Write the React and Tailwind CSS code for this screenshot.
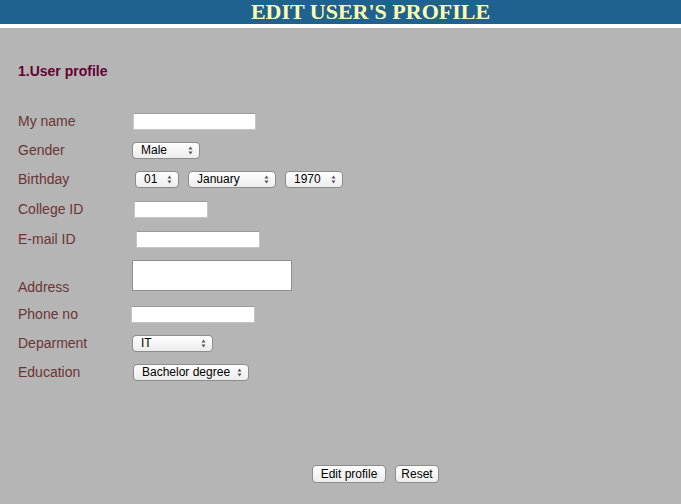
import React from 'react';

const label = "w-[113px] shrink-0 text-[14px] text-[#6b3434] leading-[17px]";
const textBox = "block h-[17px] bg-white border border-[#c4c4c4] border-t-[#9a9a9a] outline-none";

function Select({ value, options, className }) {
  return (
    <div className={"relative h-[17px] " + className}>
      <select
        defaultValue={value}
        className="block appearance-none w-full h-full rounded-[4px] border border-[#8c8c8c] bg-gradient-to-b from-white to-[#ececec] pl-[8px] text-[12px] leading-[15px] text-black outline-none"
        style={{ fontFamily: '"Liberation Sans", Arial, sans-serif' }}
      >
        {options.map((o) => (
          <option key={o}>{o}</option>
        ))}
      </select>
      <svg className="pointer-events-none absolute right-[7px] top-[4px]" width="5" height="9" viewBox="0 0 5 9">
        <path d="M2.5 0.5 L4.5 3.5 L0.5 3.5 Z M2.5 8.5 L4.5 5.5 L0.5 5.5 Z" fill="#555" />
      </svg>
    </div>
  );
}

function Row({ name, h = "h-[29px]", children }) {
  return (
    <div className={"flex items-center " + h}>
      <div className={label}>{name}</div>
      {children}
    </div>
  );
}

const btn = "h-[18px] rounded-[4px] border border-[#8c8c8c] bg-gradient-to-b from-white to-[#ececec] text-[12px] leading-[16px] text-black";

export default function App() {
  return (
    <div
      className="min-h-screen flex flex-col bg-[#b5b5b5]"
      style={{ fontFamily: '"Liberation Sans", Arial, sans-serif' }}
    >
      <div className="h-[24px] bg-[#20628f] pl-[60px] text-center">
        <h1
          className="text-[22px] font-bold leading-[24px] text-[#fdfdb0]"
          style={{ fontFamily: '"Liberation Serif", "Times New Roman", serif' }}
        >
          EDIT USER'S PROFILE
        </h1>
      </div>
      <div className="h-[4px] bg-white" />
      <div className="flex-1 pl-[18px]">
        <h2 className="mt-[35px] text-[14px] font-bold leading-[17px] text-[#660033]">1.User profile</h2>
        <form className="mt-[27px]" onSubmit={(e) => e.preventDefault()}>
          <Row name="My name">
            <input className={textBox + " w-[123px] ml-[2px]"} />
          </Row>
          <Row name="Gender">
            <Select value="Male" options={["Male", "Female"]} className="w-[68px] ml-[1px]" />
          </Row>
          <Row name="Birthday">
            <div className="flex gap-[9px] ml-[4px]">
              <Select value="01" options={["01", "02", "03"]} className="w-[44px]" />
              <Select value="January" options={["January", "February", "March"]} className="w-[88px]" />
              <Select value="1970" options={["1970", "1971", "1972"]} className="w-[58px]" />
            </div>
          </Row>
          <Row name="College ID" h="h-[30px]">
            <input className={textBox + " w-[74px] ml-[3px]"} />
          </Row>
          <Row name="E-mail ID" h="h-[30px]">
            <input className={textBox + " w-[124px] ml-[5px]"} />
          </Row>
          <div className="flex h-[46px]">
            <div className={label + " self-end pb-[4px]"}>Address</div>
            <textarea className="block mt-[6px] ml-[1px] w-[160px] h-[31px] resize-none bg-white border border-[#8e8e8e] outline-none" />
          </div>
          <Row name="Phone no">
            <input className={textBox + " w-[124px]"} />
          </Row>
          <Row name="Deparment">
            <Select value="IT" options={["IT", "CS", "EC"]} className="w-[81px] ml-[1px]" />
          </Row>
          <Row name="Education">
            <Select value="Bachelor degree" options={["Bachelor degree", "Master degree"]} className="w-[116px] ml-[2px]" />
          </Row>
          <div className="flex gap-[9px] ml-[294px] mt-[78px]">
            <button type="button" className={btn + " w-[74px]"}>
              Edit profile
            </button>
            <button type="reset" className={btn + " w-[44px]"}>
              Reset
            </button>
          </div>
        </form>
      </div>
    </div>
  );
}
